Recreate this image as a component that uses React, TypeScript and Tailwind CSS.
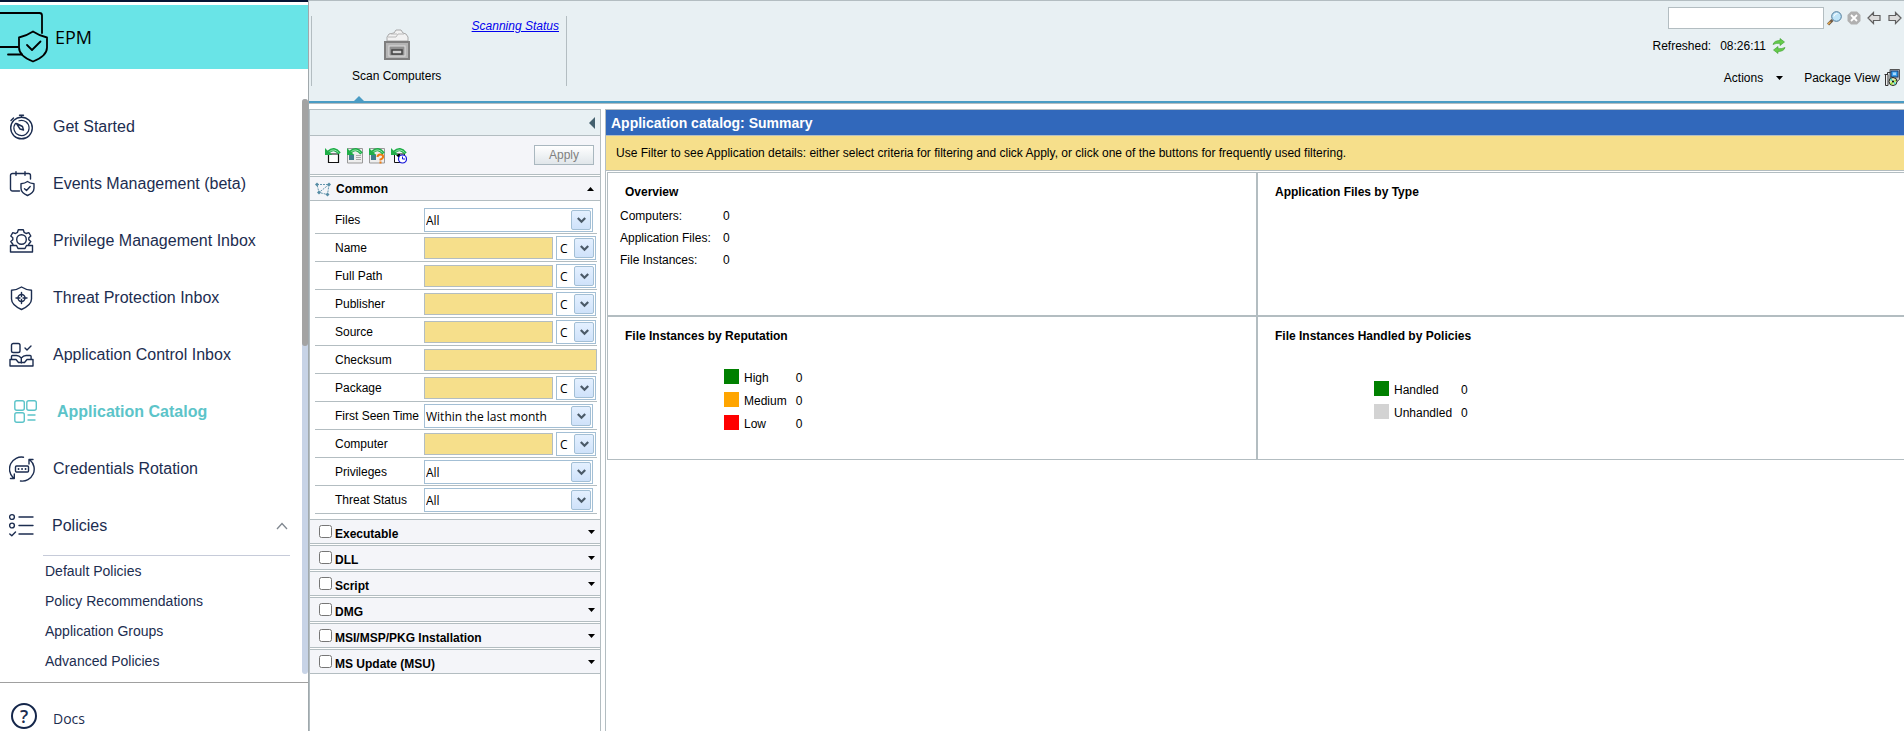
import { useState } from 'react';
import type { ReactNode } from 'react';

function Icon({ children }: { children: ReactNode }) {
  return (
    <svg
      viewBox="0 0 26 26"
      className="h-[26px] w-[26px] shrink-0"
      fill="none"
      stroke="currentColor"
      strokeWidth="1.4"
      strokeLinecap="round"
      strokeLinejoin="round"
      aria-hidden="true"
    >
      {children}
    </svg>
  );
}

const menu = [
  {
    label: 'Get Started',
    icon: (
      <>
        <circle cx="12.5" cy="14" r="10.8" />
        <path d="M10 6.8a7.600 7.600 0 1 1-3.500 2.500" strokeWidth="1.2" />
        <path d="M10.5 1.2h4M12.5 1.2v2M2 6.5 4.500 4M7.500 9.500l3.500 5.500 3.500 1-1-3.500z" />
      </>
    ),
  },
  {
    label: 'Events Management (beta)',
    icon: (
      <>
        <path d="M10.5 20h-7a2 2 0 0 1-2-2V4.5a2 2 0 0 1 2-2h16a2 2 0 0 1 2 2V8M7 .8v3.5M16 .8v3.5" />
        <path d="M18.5 10.5c2 1.5 4 2 6.500 2.200v4.500c0 3-2.500 5.500-6.500 7.300-4-1.800-6.500-4.300-6.500-7.300v-4.500c2.500-.2 4.500-.7 6.500-2.200zM15.500 17.800l2 1.800 3.700-4" />
      </>
    ),
  },
  {
    label: 'Privilege Management Inbox',
    icon: (
      <>
        <path d="M4 16.500 1.800 13.500l2-1.800v-2l-2-1.700 2-3.300 2.700.8 2-1.200.8-2.600h5l.8 2.600 2 1.200 2.700-.8 2 3.300-2 1.700v2l2 1.800-2.200 3" />
        <circle cx="12.5" cy="11.500" r="4.800" />
        <path d="M1.500 17.500h6l1.500 3h7l1.500-3h6V24h-22z" />
      </>
    ),
  },
  {
    label: 'Threat Protection Inbox',
    icon: (
      <>
        <path d="M12.500 2c3 2 6.500 3 10 3.300V14c0 5-4.500 8-10 10.500C7 22 2.500 19 2.500 14V5.300C6 5 9.500 4 12.500 2z" />
        <circle cx="12.500" cy="13" r="3.500" />
        <path d="M12.500 7.500v4M12.500 14.500v4M7 13h4M14 13h4" />
      </>
    ),
  },
  {
    label: 'Application Control Inbox',
    icon: (
      <>
        <rect x="2.500" y="1.500" width="8.500" height="9" rx="1.800" />
        <path d="M16 6l2 2 4-4M2.500 17v-2.500a1 1 0 0 1 1-1h4c2 0 3.500 1 4.800 2.500 1.300-1.500 3-2.500 4.800-2.500h4a1 1 0 0 1 1 1V17M12.300 16v5M1 17.500h6l2.500 3h6l2.500-3h6V24H1z" />
      </>
    ),
  },
  {
    label: 'Application Catalog',
    active: true,
    icon: (
      <>
        <rect x="1.800" y="1.800" width="9.500" height="9.500" rx="2" />
        <rect x="13.800" y="1.800" width="9.500" height="9.500" rx="2" />
        <rect x="1.800" y="13.800" width="9.500" height="9.500" rx="2" />
        <path d="M15 16h7M15 21h7" />
      </>
    ),
  },
  {
    label: 'Credentials Rotation',
    icon: (
      <>
        <path d="M14.500 1.200A12 12 0 0 0 4 21.500M1.500 22.500h3.800v-4.500" />
        <path d="M11.500 25a12 12 0 0 0 9.500-21M24 3.500h-4V8" />
        <rect x="6.500" y="10" width="13" height="6" rx="1" />
        <path d="M9.500 13h.1M13 13h.1M16.500 13h.1" strokeWidth="1.800" />
      </>
    ),
  },
];

const policies = ['Default Policies', 'Policy Recommendations', 'Application Groups', 'Advanced Policies'];

function Sidebar() {
  return (
    <aside className="flex w-[309px] shrink-0 flex-col border-r border-[#a0a8ac] bg-white text-[#1c2d50]">
      <div className="h-[5px] border-b-[3px] border-white bg-[#041433]" />
      <div className="flex h-16 items-center gap-[7px] bg-[#69e4e7] text-black">
        <svg width="48" height="64" viewBox="0 0 48 64" fill="none" stroke="currentColor" strokeWidth="1.8" strokeLinecap="round" strokeLinejoin="round" aria-hidden="true">
          <path d="M0 8h39.500q2.500 0 2.500 2.500V28M0 42h18M8 49.500h14" />
          <path d="M33 26.500c4.500 3 9 5 14 6v10c0 6-5 10.500-14 14-9-3.500-14-8-14-14v-10c5-1 9.500-3 14-6z" />
          <path d="m27 40 5 5 8.500-8.500" />
        </svg>
        <h1 className="font-['Open_Sans',sans-serif] text-lg">EPM</h1>
      </div>

      <div className="mt-[30px] flex">
        <nav className="min-w-0 flex-1 pb-[6px] text-base">
          {menu.map((item) => (
            <a
              key={item.label}
              href="#"
              className={
                item.active
                  ? 'flex h-[57px] items-center gap-[18px] pb-[2px] pl-[13px] font-bold text-[#5cc4c9]'
                  : 'flex h-[57px] items-center gap-[18px] pb-[2px] pl-[9px]'
              }
            >
              <Icon>{item.icon}</Icon>
              {item.label}
            </a>
          ))}
          <button type="button" aria-expanded="true" className="flex h-[57px] w-full items-center gap-[17px] pb-[2px] pl-[9px] pr-[14px] text-left">
            <Icon>
              <circle cx="3" cy="4" r="2.400" />
              <circle cx="3" cy="12.500" r="2.400" />
              <path d="m.8 21 2 1.800L6.500 19M10 4h14M10 12.500h14M10 21h14" />
            </Icon>
            <span className="flex-1">Policies</span>
            <svg width="12" height="8" viewBox="0 0 12 8" fill="none" stroke="#808890" strokeWidth="1.300" aria-hidden="true">
              <path d="m1 7 5-5.500L11 7" />
            </svg>
          </button>
          <ul className="ml-[43px] mr-[12px] border-t border-[#c6cbd9] text-sm">
            {policies.map((name) => (
              <li key={name}>
                <a href="#" className="flex h-[30px] items-center pl-[2px]">{name}</a>
              </li>
            ))}
          </ul>
        </nav>
        <div className="mb-[8px] w-[6px] rounded-full bg-[#c7d3e6]">
          <div className="h-[43%] rounded-full bg-[#a3a3a3]" />
        </div>
      </div>

      <a href="#" className="flex items-center gap-[16px] border-t border-[#a0a0a0] pl-[11px] pt-[19px] font-['Open_Sans',sans-serif] text-sm">
        <span className="flex h-[26px] w-[26px] items-center justify-center rounded-full border-2 border-[#14264a] text-lg font-semibold">?</span>
        <span className="pt-[7px]">Docs</span>
      </a>
    </aside>
  );
}

function DrawerIcon() {
  return (
    <svg width="28" height="32" viewBox="0 0 28 32" aria-hidden="true">
      <path d="M4 12V8l2-3 5-1 2-3h5l2 3 3 1 2 3v4z" fill="#f2f2f2" stroke="#a8a8a8" />
      <path d="M5 8h8l2-3h6M8 5h6" fill="none" stroke="#b8b8b8" />
      <rect x="2" y="13" width="24" height="17" fill="#b5b5b5" stroke="#7e7e7e" strokeWidth="2" />
      <rect x="6" y="17" width="16" height="10" fill="#8f8f8f" stroke="#dedede" />
      <rect x="9" y="21" width="10" height="4" fill="#d0d0d0" stroke="#444" strokeWidth="1.500" />
    </svg>
  );
}

function Triangle({ up = false }: { up?: boolean }) {
  return (
    <svg width="7" height="4" viewBox="0 0 7 4" aria-hidden="true">
      <path d={up ? 'M0 4h7L3.500 0z' : 'M0 0h7L3.500 4z'} />
    </svg>
  );
}

function ArrowIcon({ flip = false }: { flip?: boolean }) {
  return (
    <svg width="14" height="14" viewBox="0 0 14 14" fill="#dcdcdc" stroke="#606060" strokeWidth="1.200" aria-hidden="true">
      <path d={flip ? 'M13 7 7.500 1.500v3H1v5h6.500v3z' : 'M1 7l5.500-5.500v3H13v5H6.500v3z'} />
    </svg>
  );
}

function Header() {
  return (
    <header className="relative flex h-[104px] items-start justify-between border-b border-t border-[#b3bdc1] bg-[#e8f0f3]">
      <div className="ml-[2px] mt-[15px] flex h-[70px] w-[256px] items-start justify-between border-x border-[#b3bdc1] pr-[7px]">
        <button type="button" className="ml-[40px] mt-[13px] flex flex-col items-center gap-[7px]">
          <DrawerIcon />
          Scan Computers
        </button>
        <a href="#" className="whitespace-nowrap pt-[2px] italic text-[#0000ee] underline">Scanning Status</a>
      </div>

      <div className="flex flex-col items-end">
        <form className="mr-[2px] mt-[6px] flex items-center" onSubmit={(e) => e.preventDefault()}>
          <input type="text" aria-label="Search" className="h-[22px] w-[156px] border border-[#b3bdc1] bg-white px-1" />
          <button type="submit" aria-label="Find" className="ml-[3px]">
            <svg width="15" height="15" viewBox="0 0 15 15" aria-hidden="true">
              <path d="M1 13.500 5.500 9" stroke="#6e5a48" strokeWidth="3" />
              <path d="m1 13.200 2.500-2.500" stroke="#e8aa4c" strokeWidth="1.500" />
              <circle cx="9.500" cy="5.500" r="4.800" fill="#bfe4f8" stroke="#4c7898" />
              <path d="M6.800 5.500q.5-3 3.700-3" stroke="#fff" fill="none" />
            </svg>
          </button>
          <button type="button" aria-label="Clear" className="ml-[5px]">
            <svg width="14" height="14" viewBox="0 0 14 14" aria-hidden="true">
              <path d="M4 .5h6L13.500 4v6L10 13.500H4L.5 10V4z" fill="#b0b0b0" />
              <path d="m4 4 6 6M10 4l-6 6" stroke="#fff" strokeWidth="1.800" />
            </svg>
          </button>
          <button type="button" aria-label="Previous" className="ml-[6px]"><ArrowIcon /></button>
          <button type="button" aria-label="Next" className="ml-[7px]"><ArrowIcon flip /></button>
        </form>

        <div className="mr-[118px] mt-[9px] flex items-center">
          <span>Refreshed:</span>
          <span className="ml-[9px]">08:26:11</span>
          <button type="button" aria-label="Refresh" className="ml-[6px]">
            <svg width="14" height="16" viewBox="0 0 14 16" fill="#65cc4b" stroke="#3b9c2c" strokeWidth=".6" aria-hidden="true">
              <path d="M1 6.500Q2 2.500 8 2.500V.5L12.500 4 8 7.500V5.300Q4 5 1 6.500z" />
              <path d="M13 9.500q-1 4-7 4v2L1.500 12 6 8.500v2.200q4 .3 7-1.200z" />
            </svg>
          </button>
        </div>

        <div className="mr-[4px] mt-[15px] flex items-center">
          <button type="button" className="flex items-center gap-[13px]">
            Actions
            <Triangle />
          </button>
          <button type="button" className="ml-[21px] flex items-center gap-[4px]">
            Package View
            <svg width="16" height="17" viewBox="0 0 16 17" aria-hidden="true">
              <path d="M6 .5h9.500v10L13 12.500H6z" fill="#c4c4c4" stroke="#555" />
              <path d="M.5 5.500h3v-2h3M1.500 5.500h2.500v11H1.500z" fill="#eee" stroke="#333" />
              <rect x="7" y="2" width="7" height="6" fill="#3aa0ee" stroke="#16386e" />
              <path d="M9 3.500h3v2.500H9z" fill="#a8d8ff" />
              <circle cx="9" cy="12.500" r="4" fill="#e8e8b0" stroke="#222" />
              <path d="M9 12.500 6 11l1-2zM9 12.500l3 1.500-1 2z" fill="#35d8d0" />
              <path d="m9 12.500 3-2v2zM9 12.500l-3 2 2 1.500z" fill="#8ee025" />
              <circle cx="9" cy="12.500" r="1" />
            </svg>
          </button>
        </div>
      </div>

      {/* marker of the open ribbon group */}
      <div className="absolute inset-x-0 bottom-0 h-[2px] bg-[#4a9cc4]" />
      <svg width="10" height="5" viewBox="0 0 10 5" className="absolute bottom-[2px] left-[45px]" aria-hidden="true">
        <path d="M0 5h10L5 0z" fill="#4a9cc4" />
      </svg>
    </header>
  );
}

function Select({ id, label, options, small = false }: { id: string; label?: string; options: string[]; small?: boolean }) {
  return (
    <div className={small ? 'relative w-[40px]' : 'relative w-[169px]'}>
      <select
        id={id}
        aria-label={label}
        className={
          small
            ? "block h-[24px] w-full appearance-none border border-[#a3bfd5] bg-white pl-[3px] pt-[2px] font-['Open_Sans',sans-serif]"
            : "block h-[24px] w-full appearance-none border border-[#a3bfd5] bg-white pl-px pt-[2px] font-['Open_Sans',sans-serif]"
        }
      >
        {options.map((option) => (
          <option key={option}>{option}</option>
        ))}
      </select>
      <span className="pointer-events-none absolute right-[2px] top-[2px] flex h-[20px] w-[20px] items-center justify-center rounded-[2px] border border-[#a3bfd5] bg-linear-to-b from-[#e4f0ff] to-[#cfe2fa]">
        <svg width="9" height="7" viewBox="0 0 9 7" fill="none" stroke="#4b5a68" strokeWidth="2.200" aria-hidden="true">
          <path d="m.8 1 3.700 3.700L8.200 1" />
        </svg>
      </span>
    </div>
  );
}

type Field = { label: string; type: 'select' | 'match' | 'text'; value?: string };

const fields: Field[] = [
  { label: 'Files', type: 'select', value: 'All' },
  { label: 'Name', type: 'match' },
  { label: 'Full Path', type: 'match' },
  { label: 'Publisher', type: 'match' },
  { label: 'Source', type: 'match' },
  { label: 'Checksum', type: 'text' },
  { label: 'Package', type: 'match' },
  { label: 'First Seen Time', type: 'select', value: 'Within the last month' },
  { label: 'Computer', type: 'match' },
  { label: 'Privileges', type: 'select', value: 'All' },
  { label: 'Threat Status', type: 'select', value: 'All' },
];

function FilterRow({ field }: { field: Field }) {
  const id = field.label.toLowerCase().replace(/ /g, '-');
  return (
    <div className="flex h-[28px] border-b border-[#b3bdc1] pt-[2px]">
      <label htmlFor={id} className="flex h-[24px] w-[109px] shrink-0 items-center whitespace-nowrap pl-[20px]">
        {field.label}
      </label>
      <div className="flex h-[24px] min-w-0 flex-1 items-center gap-[3px]">
        {field.type === 'select' ? (
          <Select id={id} options={[field.value ?? '']} />
        ) : (
          <input id={id} type="text" className="h-[22px] min-w-0 flex-1 border border-[#b3bdc1] bg-[#f6df8b] px-1" />
        )}
        {field.type === 'match' && (
          <div className="mr-px">
            <Select small id={`${id}-match`} label={`${field.label} match`} options={['C']} />
          </div>
        )}
      </div>
    </div>
  );
}

const groups = ['Executable', 'DLL', 'Script', 'DMG', 'MSI/MSP/PKG Installation', 'MS Update (MSU)'];

/* green undo arrow shared by the four quick filters */
function QuickIcon({ children }: { children: ReactNode }) {
  return (
    <svg width="16" height="17" viewBox="0 0 16 17" aria-hidden="true">
      {children}
      <path d="M3.500 5Q9-.5 14.500 6.500" fill="none" stroke="#1fae48" strokeWidth="3.200" />
      <path d="M4.500 4.500Q9 1 13.500 5.500" fill="none" stroke="#a9ecbb" strokeWidth=".9" />
      <path d="M0 1v7h7.500L5 6z" fill="#1fae48" />
    </svg>
  );
}

const quickFilters = [
  { label: 'Clear filter', icon: <path d="M3.500 7v8.500h10V7z" fill="#fff" stroke="#111" strokeWidth="1.200" /> },
  {
    label: 'Executables',
    icon: (
      <>
        <path d="M.5 1.500h15v14.500H.5z" fill="#eee" stroke="#999" />
        <path d="M2 8h5v5H2z" fill="#3e7d8c" />
        <path d="M9 8.500h5M9 10.500h5M9 12.500h5" stroke="#aaa" />
      </>
    ),
  },
  {
    label: 'Unknown applications',
    icon: (
      <>
        <path d="M.5 1.500h15v14.500H.5z" fill="#eee" stroke="#999" />
        <path d="M2 8h5v5H2z" fill="#3e7d8c" />
        <path d="M8.500 10q0-2.500 2.800-2.500t2.800 2.300q0 1.700-2.600 2.700v1M11.500 14.500v2" stroke="#f07c12" strokeWidth="2" fill="none" />
      </>
    ),
  },
  {
    label: 'Recent applications',
    icon: (
      <>
        <path d="M3.500 7v8.500h10V7z" fill="#fff" stroke="#111" />
        <path d="m4 7 5 5V7z" />
        <circle cx="11.500" cy="12" r="4" fill="#fff" stroke="#1414dc" strokeWidth="1.200" />
        <path d="M11.500 9.500V12h2.500" fill="none" stroke="#1414dc" />
      </>
    ),
  },
];

function FilterPanel() {
  const [checked, setChecked] = useState<string[]>([]);

  const toggle = (name: string) => {
    setChecked(checked.includes(name) ? checked.filter((g) => g !== name) : [...checked, name]);
  };

  return (
    <section className="flex w-[292px] shrink-0 flex-col border-x border-t border-[#b3bdc1]">
      <div className="flex h-[26px] items-center justify-end border-b border-[#b3bdc1] bg-[#e8f0f3] pr-[5px]">
        <button type="button" aria-label="Collapse filter">
          <svg width="6" height="12" viewBox="0 0 6 12" className="block" aria-hidden="true">
            <path d="M6 0v12L0 6z" fill="#44606e" />
          </svg>
        </button>
      </div>
      <div className="flex h-[39px] items-center justify-between border-b border-[#b3bdc1] bg-[#f4f5f9] pl-[15px] pr-[6px]">
        <div className="flex gap-[6px]">
          {quickFilters.map((filter) => (
            <button key={filter.label} type="button" aria-label={filter.label}>
              <QuickIcon>{filter.icon}</QuickIcon>
            </button>
          ))}
        </div>
        <button type="button" className="h-[20px] w-[60px] border border-[#a9b7bf] bg-linear-to-b from-white to-[#e0e6ea] text-[#808080]">
          Apply
        </button>
      </div>

      <div className="mt-px flex h-[25px] items-center border-y border-[#b3bdc1] bg-[#f4f5f9] pl-[5px] pr-[6px]">
        <svg width="16" height="16" viewBox="0 0 16 16" fill="#568ca5" stroke="#568ca5" aria-hidden="true">
          <path d="M2 3.500h12L4 11.500 2 3.500M14 3.500l-1.500 10L4 11.500" fill="none" strokeWidth=".9" strokeDasharray="2 1" />
          <path d="m2 1.500 2 2-2 2-2-2zM14 1.500l2 2-2 2-2-2zM4 9.500l2 2-2 2-2-2zM12.500 11.500l2 2-2 2-2-2z" stroke="none" />
        </svg>
        <h2 className="ml-[5px] flex-1 font-bold">Common</h2>
        <button type="button" aria-label="Collapse Common"><Triangle up /></button>
      </div>

      <div className="pb-[5px] pl-[5px] pr-[3px] pt-[5px]">
        {fields.map((field) => (
          <FilterRow key={field.label} field={field} />
        ))}
      </div>

      <div className="flex flex-col gap-px">
        {groups.map((name) => (
          <div key={name} className="flex h-[25px] items-center border-y border-[#b3bdc1] bg-[#f4f5f9] pl-[9px] pr-[5px]">
            <label className="flex flex-1 items-center gap-[3px] font-bold">
              <input
                type="checkbox"
                className="h-[13px] w-[13px]"
                checked={checked.includes(name)}
                onChange={() => toggle(name)}
              />
              <span className="pt-[4px]">{name}</span>
            </label>
            <button type="button" aria-label={`Expand ${name}`}><Triangle /></button>
          </div>
        ))}
      </div>
    </section>
  );
}

function Legend({ items }: { items: { label: string; color: string }[] }) {
  return (
    <table>
      <tbody>
        {items.map((item) => (
          <tr key={item.label} className="h-[23px]">
            <td className="w-[20px] p-0"><div className={`h-[15px] w-[15px] ${item.color}`} /></td>
            <td className="p-0 pr-[9px] pt-[2px]">{item.label}</td>
            <td className="p-0 pt-[2px]">0</td>
          </tr>
        ))}
      </tbody>
    </table>
  );
}

function Summary() {
  return (
    <main className="ml-[4px] min-w-0 flex-1 overflow-hidden border-l border-t border-[#b3bdc1]">
      <h1 className="flex h-[26px] items-center border-b border-[#b3bdc1] bg-[#3168bb] pl-[5px] pt-px text-sm font-bold text-white">
        Application catalog: Summary
      </h1>
      <p className="flex h-[35px] items-center border-b border-[#b3bdc1] bg-[#f6df8b] pl-[10px]">
        Use Filter to see Application details: either select criteria for filtering and click Apply, or click one of the buttons for frequently used filtering.
      </p>
      {/* the grid runs slightly past the right edge, so its last border is cut off */}
      <div className="-mr-[3px] ml-px mt-px grid grid-cols-2">
        <section className="h-[144px] border border-[#b3bdc1]">
          <h2 className="pl-[17px] pt-[11px] font-bold">Overview</h2>
          <table className="ml-[12px] mt-[5px]">
            <tbody>
              {['Computers:', 'Application Files:', 'File Instances:'].map((label) => (
                <tr key={label} className="h-[22px]">
                  <td className="w-[103px] p-0">{label}</td>
                  <td className="p-0">0</td>
                </tr>
              ))}
            </tbody>
          </table>
        </section>
        <section className="h-[144px] border border-[#b3bdc1]">
          <h2 className="pl-[17px] pt-[11px] font-bold">Application Files by Type</h2>
        </section>
        <section className="h-[144px] border border-[#b3bdc1]">
          <h2 className="pl-[17px] pt-[11px] font-bold">File Instances by Reputation</h2>
          <div className="ml-[116px] mt-[21px]">
            <Legend
              items={[
                { label: 'High', color: 'bg-[#008000]' },
                { label: 'Medium', color: 'bg-[#ffa500]' },
                { label: 'Low', color: 'bg-[#ff0000]' },
              ]}
            />
          </div>
        </section>
        <section className="h-[144px] border border-[#b3bdc1]">
          <h2 className="pl-[17px] pt-[11px] font-bold">File Instances Handled by Policies</h2>
          <div className="ml-[116px] mt-[33px]">
            <Legend
              items={[
                { label: 'Handled', color: 'bg-[#008000]' },
                { label: 'Unhandled', color: 'bg-[#d3d3d3]' },
              ]}
            />
          </div>
        </section>
      </div>
    </main>
  );
}

export default function App() {
  return (
    <div className="flex min-h-screen overflow-hidden bg-white font-['Liberation_Sans',Arial,sans-serif] text-xs text-black">
      <Sidebar />
      <div className="flex min-w-0 flex-1 flex-col">
        <Header />
        <div className="mt-[5px] flex flex-1">
          <FilterPanel />
          <Summary />
        </div>
      </div>
    </div>
  );
}
